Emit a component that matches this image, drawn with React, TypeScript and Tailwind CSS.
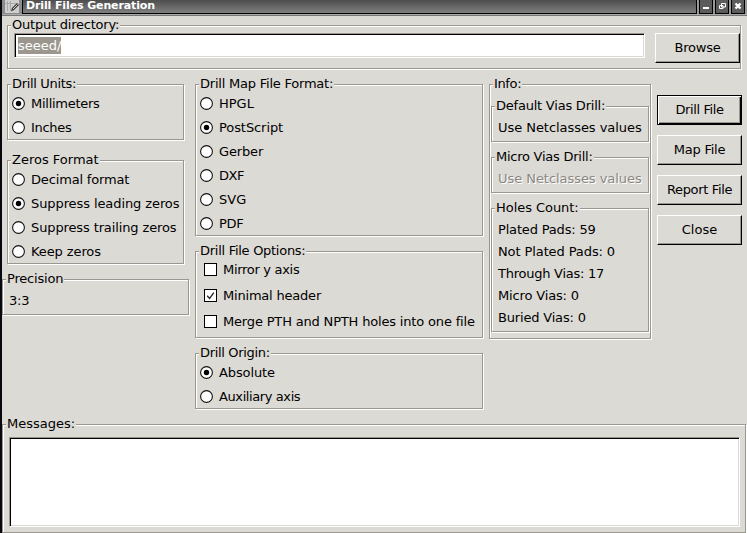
import React from "react";

type BoxProps = { title: string; className: string; track?: string; children: React.ReactNode };

function GroupBox({ title, className, track = "", children }: BoxProps) {
  return (
    <section
      className={`flex shrink-0 flex-col items-stretch border border-[#9b978f] shadow-[1px_1px_0_#fff,inset_1px_1px_0_#fff] ${className}`}
    >
      <h2 className={`-mt-[10px] ml-[3px] h-[17px] shrink-0 self-start bg-[#dcdad5] px-px leading-[17px] ${track}`}>{title}</h2>
      {children}
    </section>
  );
}

type OptionProps = { label: string; checked?: boolean; track?: string };

function Radio({ label, checked = false, track = "" }: OptionProps) {
  return (
    <label className="flex h-6 shrink-0 items-center gap-[6px]">
      <svg width="13" height="13" viewBox="0 0 13 13" className="shrink-0">
        <circle cx="6.5" cy="6.5" r="5.9" fill="#fff" stroke="#111" strokeWidth="1.1" />
        {checked && <circle cx="6.5" cy="6.5" r="2.7" fill="#000" />}
      </svg>
      <span className={track}>{label}</span>
    </label>
  );
}

function Check({ label, checked = false, track = "" }: OptionProps) {
  return (
    <label className="flex h-[26px] shrink-0 items-center gap-[6px]">
      <svg width="13" height="13" viewBox="0 0 13 13" className="shrink-0">
        <rect x="0.5" y="0.5" width="12" height="12" fill="#fff" stroke="#000" />
        {checked && <path d="M3.2 6.8 5.6 9.4 9.8 3.6" fill="none" stroke="#222" strokeWidth="1.3" />}
      </svg>
      <span className={track}>{label}</span>
    </label>
  );
}

function Button({ label, primary = false, track = "" }: { label: string; primary?: boolean; track?: string }) {
  return (
    <button
      className={`h-[30px] w-[85px] shrink-0 border pb-px text-center leading-[26px] ${track} ${
        primary
          ? "border-black shadow-[inset_1px_1px_0_#fff,inset_-1px_-1px_0_#000,inset_-2px_-2px_0_#9b978f]"
          : "border-t-white border-l-white border-r-black border-b-black shadow-[inset_-1px_-1px_0_#9b978f]"
      }`}
    >
      {label}
    </button>
  );
}

function TitleBar() {
  return (
    <header className="flex h-[14px] shrink-0 bg-[#999]">
      <svg width="20" height="14" viewBox="0 0 20 14" className="shrink-0">
        <rect width="20" height="14" fill="#8c8c8c" />
        <path d="M3 0h14v13H3z" fill="#cfcfcf" />
        <path d="M5.5 1v10M8.5 1v10M3 3.5h12" stroke="#aaa" strokeWidth="1" />
        <path d="M9 11.5l1-3.5 5-5 2 2-5 5z" fill="#3a3a3a" />
        <path d="M11 9l4.5-4.5" stroke="#d8d8b0" />
      </svg>
      <h1 className="h-[14px] grow border-x border-b border-black bg-gradient-to-b from-[#4d4d4d] to-[#808080] pl-[3px] text-[11px] leading-[11px] font-bold tracking-[-0.12px] text-white">
        Drill Files Generation
      </h1>
      <svg width="50" height="14" viewBox="0 0 50 14" className="shrink-0">
        <rect width="50" height="14" fill="#999" />
        <path d="M2 0h14v14H2zM18 0h14v14H18zM34 0h14v14H34z" fill="#000" />
        <path d="M3 0h12v13H3zM19 0h12v13H19zM35 0h12v13H35z" fill="#5c5c5c" />
        <path d="M6 7h6v2H6z" fill="#fff" />
        <path d="M24.5 3.5h4v3.5h-4zM22.5 5.5h3.5v3h-3.5z" fill="#5c5c5c" stroke="#fff" />
        <path d="M38.5 3.5l5 5M43.5 3.5l-5 5" stroke="#fff" strokeWidth="2.4" />
      </svg>
    </header>
  );
}

export default function App() {
  return (
    <div className="flex h-[533px] w-[747px] flex-col overflow-hidden border-l-2 border-[#08080d] bg-[#dcdad5] font-['DejaVu_Sans',sans-serif] text-[13px] leading-[17px] text-black">
      <TitleBar />
      <div className="h-[2px] shrink-0 border-b border-[#777] bg-[#aaa]" />
      <GroupBox title="Output directory:" track="tracking-[-0.22px]" className="mt-[9px] ml-[5px] h-[44px] w-[734px]">
        <div className="flex items-start justify-between pl-[6px]">
          <div className="flex h-[25px] w-[631px] border border-t-[#9b978f] border-r-white border-b-white border-l-[#9b978f] bg-white shadow-[inset_1px_1px_0_#000,inset_-1px_-1px_0_#dcdad5]">
            <span className="mt-[3px] ml-[3px] h-[17px] bg-[#9b978f] leading-[17px] text-white">seeed/</span>
          </div>
          <Button label="Browse" track="tracking-[-0.2px]" />
        </div>
      </GroupBox>
      <main className="mt-[15px] flex h-[325px] shrink-0">
        <div className="flex w-[193px] shrink-0 flex-col">
          <GroupBox title="Drill Units:" track="tracking-[-0.33px]" className="ml-[5px] h-[56px] w-[177px]">
            <div className="-mt-px flex flex-col pl-1">
              <Radio label="Millimeters" checked track="tracking-[-0.27px]" />
              <Radio label="Inches" track="tracking-[-0.3px]" />
            </div>
          </GroupBox>
          <GroupBox title="Zeros Format" className="mt-5 ml-[5px] h-[104px] w-[177px]">
            <div className="-mt-px flex flex-col pl-1 whitespace-nowrap">
              <Radio label="Decimal format" track="tracking-[-0.16px]" />
              <Radio label="Suppress leading zeros" checked track="tracking-[-0.09px]" />
              <Radio label="Suppress trailing zeros" track="tracking-[-0.12px]" />
              <Radio label="Keep zeros" track="tracking-[-0.1px]" />
            </div>
          </GroupBox>
          <GroupBox title="Precision" track="tracking-[-0.2px]" className="mt-[15px] h-[36px] w-[187px]">
            <p className="mt-[5px] ml-[6px] tracking-[-0.2px]">3:3</p>
          </GroupBox>
        </div>
        <div className="flex w-[294px] shrink-0 flex-col">
          <GroupBox title="Drill Map File Format:" track="tracking-[-0.22px]" className="h-[152px] w-[288px]">
            <div className="-mt-px flex flex-col pl-1">
              <Radio label="HPGL" />
              <Radio label="PostScript" checked track="tracking-[-0.08px]" />
              <Radio label="Gerber" track="tracking-[-0.15px]" />
              <Radio label="DXF" track="tracking-[-0.4px]" />
              <Radio label="SVG" />
              <Radio label="PDF" track="tracking-[-0.3px]" />
            </div>
          </GroupBox>
          <GroupBox title="Drill File Options:" track="tracking-[-0.28px]" className="mt-[15px] h-[87px] w-[288px]">
            <div className="-mt-[3px] flex flex-col pl-2 whitespace-nowrap">
              <Check label="Mirror y axis" track="tracking-[-0.3px]" />
              <Check label="Minimal header" checked track="tracking-[-0.2px]" />
              <Check label="Merge PTH and NPTH holes into one file" track="tracking-[-0.17px]" />
            </div>
          </GroupBox>
          <GroupBox title="Drill Origin:" track="tracking-[-0.33px]" className="mt-[15px] h-[56px] w-[288px]">
            <div className="-mt-px flex flex-col pl-1">
              <Radio label="Absolute" checked track="tracking-[-0.1px]" />
              <Radio label="Auxiliary axis" track="tracking-[-0.4px]" />
            </div>
          </GroupBox>
        </div>
        <GroupBox title="Info:" track="tracking-[-0.35px]" className="h-[255px] w-[162px]">
          <div className="flex flex-col px-px pt-[14px]">
            <GroupBox title="Default Vias Drill:" track="tracking-[-0.22px]" className="h-[36px]">
              <p className="mt-[5px] ml-[6px] tracking-[-0.05px] whitespace-nowrap">Use Netclasses values</p>
            </GroupBox>
            <GroupBox title="Micro Vias Drill:" track="tracking-[-0.25px]" className="mt-[15px] h-[36px]">
              <p className="mt-[5px] ml-[6px] tracking-[-0.05px] whitespace-nowrap text-[#8b8882] [text-shadow:1px_1px_0_#fff]">
                Use Netclasses values
              </p>
            </GroupBox>
            <GroupBox title="Holes Count:" track="tracking-[-0.05px]" className="mt-[15px] h-[124px]">
              <div className="mt-[5px] ml-[6px] flex flex-col gap-[5px] whitespace-nowrap">
                <p className="tracking-[-0.17px]">Plated Pads: 59</p>
                <p className="tracking-[-0.1px]">Not Plated Pads: 0</p>
                <p className="tracking-[-0.25px]">Through Vias: 17</p>
                <p className="tracking-[-0.15px]">Micro Vias: 0</p>
                <p className="tracking-[-0.18px]">Buried Vias: 0</p>
              </div>
            </GroupBox>
          </div>
        </GroupBox>
        <nav className="mt-[11px] ml-[6px] flex flex-col gap-[10px]">
          <Button label="Drill File" primary track="tracking-[-0.4px]" />
          <Button label="Map File" track="tracking-[-0.25px]" />
          <Button label="Report File" track="tracking-[-0.35px]" />
          <Button label="Close" />
        </nav>
      </main>
      <GroupBox title="Messages:" className="mt-[15px] h-[109px] w-[744px]">
        <div className="mt-[5px] ml-[6px] h-[90px] w-[731px] border border-t-[#9b978f] border-r-white border-b-white border-l-[#9b978f] bg-white shadow-[inset_1px_1px_0_#000,inset_-1px_-1px_0_#dcdad5]" />
      </GroupBox>
    </div>
  );
}
